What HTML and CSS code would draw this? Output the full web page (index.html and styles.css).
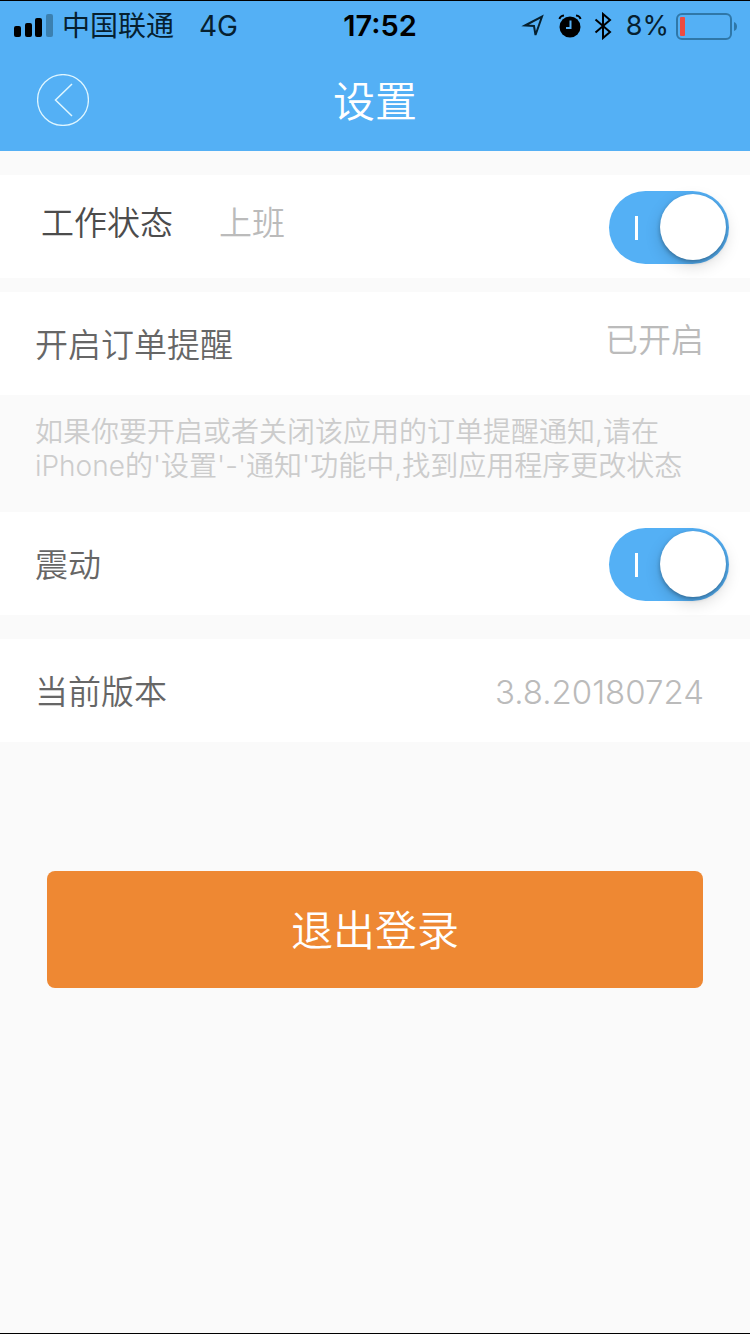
FILE: index.html
```
<!DOCTYPE html>
<html lang="zh-CN">
<head>
    <meta charset="UTF-8">
    <meta name="viewport" content="width=device-width, initial-scale=1.0">
    <title>设置</title>
    <link rel="stylesheet" href="styles.css">
</head>
<body>
    <header>
        <div class="status-bar">
            <div class="status-left">
                <svg class="signal" width="40" height="24" viewBox="0 0 40 24">
                    <rect x="0" y="13" width="7" height="11" rx="2"/>
                    <rect x="11" y="10" width="7" height="14" rx="2"/>
                    <rect x="21" y="5" width="7" height="19" rx="2"/>
                    <rect x="32" y="1" width="7" height="23" rx="2" fill="#3b80b0"/>
                </svg>
                <span class="carrier">中国联通</span>
                <span>4G</span>
            </div>
            <div class="time">17:52</div>
            <div class="status-right">
                <svg width="24" height="26" viewBox="0 0 24 26" fill="none" stroke="#06202f" stroke-width="2" stroke-linejoin="miter">
                    <path d="M4 12.500 L21 3.500 L14.500 22 L13 13 Z"/>
                </svg>
                <svg class="alarm" width="24" height="26" viewBox="0 0 24 26">
                    <circle cx="12" cy="14" r="10.500"/>
                    <path d="M1.500 6 Q2 3 6 2.500 M22.500 6 Q22 3 18 2.500" fill="none" stroke="#000" stroke-width="2"/>
                    <path d="M12.500 7.500 V15 H8" fill="none" stroke="#54b0f5" stroke-width="2"/>
                </svg>
                <svg class="bluetooth" width="18" height="28" viewBox="0 0 18 28" fill="none" stroke="#000" stroke-width="2">
                    <path d="M1.500 7.500 L16 20 L9 26 V2 L16 8 L1.500 20.500"/>
                </svg>
                <span class="percent">8%</span>
                <svg class="battery" width="62" height="28" viewBox="0 0 62 28">
                    <rect x="1" y="2" width="54" height="25" rx="5" fill="none" stroke="#2f77a8" stroke-width="2"/>
                    <rect x="4" y="5" width="5" height="19" rx="1" fill="#ee4b40"/>
                    <path d="M58 10 Q61 11 61 14.500 Q61 18 58 19 Z" fill="#2f77a8"/>
                </svg>
            </div>
        </div>
        <div class="nav">
            <button class="back" type="button" aria-label="返回">
                <svg width="52" height="52" viewBox="0 0 52 52" fill="none" stroke="#dff6ff">
                    <circle cx="26" cy="26" r="25.400" stroke-width="1.300"/>
                    <path d="M35 10 L18.500 26 L35 42" stroke-width="1.500"/>
                </svg>
            </button>
            <h1>设置</h1>
        </div>
    </header>

    <main>
        <section class="row work">
            <label class="strong raised" for="work">工作状态</label>
            <span class="value raised">上班</span>
            <input class="switch" type="checkbox" id="work" checked>
        </section>
        <section class="row">
            <span>开启订单提醒</span>
            <span class="value end raised">已开启</span>
        </section>
        <p class="note">如果你要开启或者关闭该应用的订单提醒通知,请在iPhone的'设置'-'通知'功能中,找到应用程序更改状态</p>
        <section class="row">
            <label for="shake">震动</label>
            <input class="switch" type="checkbox" id="shake" checked>
        </section>
        <section class="row version">
            <span>当前版本</span>
            <span class="value end">3.8.20180724</span>
        </section>
        <button class="logout" type="button">退出登录</button>
    </main>
</body>
</html>
```

FILE: styles.css
```
* {
    box-sizing: border-box;
}
body {
    margin: 0;
    min-height: 100vh;
    border-top: 1px solid #000;
    border-bottom: 1px solid #000;
    background-color: #fafafa;
    color: #666;
    font-family: Inter, "Noto Sans CJK SC", sans-serif;
    font-size: 33px;
    font-weight: 350;
    line-height: 48px;
}
button {
    border: none;
    padding: 0;
    font-family: inherit;
    font-weight: inherit;
    cursor: pointer;
}
svg {
    display: block;
}
header {
    background-color: #54b0f5;
}
.status-bar {
    display: grid;
    grid-template-columns: 1fr auto 1fr;
    align-items: center;
    height: 50px;
    padding: 0 12px 0 14px;
    color: #06202f;
    font-size: 28px;
    font-weight: 400;
}
.status-left, .status-right {
    display: flex;
    align-items: center;
}
.status-right {
    justify-content: flex-end;
}
.signal {
    margin-bottom: 2px;
}
.carrier {
    margin: 0 25px 0 8px;
}
.time {
    padding-left: 8px;
    color: #000;
    font-size: 29px;
    font-weight: 600;
}
.alarm {
    margin-left: 13px;
}
.bluetooth {
    margin: 0 14px 0 12px;
}
.percent {
    font-size: 27px;
    margin-right: 7px;
}
.nav {
    display: grid;
    grid-template-columns: 1fr auto 1fr;
    align-items: center;
    height: 100px;
    padding: 0 37px 2px;
}
.back {
    width: 52px;
    height: 52px;
    background: none;
}
h1 {
    margin: 0;
    padding-top: 4px;
    color: #fff;
    font-size: 42px;
    font-weight: inherit;
}
main {
    padding-top: 24px;
}
.row {
    display: flex;
    align-items: center;
    min-height: 103px;
    padding: 2px 21px 0 35px;
    background-color: #fff;
}
.work {
    margin-bottom: 14px;
    padding-left: 41px;
}
.strong {
    margin-right: 46px;
    color: #4c4c4c;
}
.value {
    color: #bbb;
}
.end {
    margin-left: auto;
    padding-right: 25px;
}
.raised {
    padding-bottom: 9px;
}
.note {
    margin: 0;
    padding: 20px 47px 29px 35px;
    color: #ccc;
    font-size: 28px;
    line-height: 34px;
}
.version {
    margin-top: 24px;
}
.switch {
    appearance: none;
    position: relative;
    width: 120px;
    height: 73px;
    margin: 0 0 0 auto;
    border-radius: 37px;
    background-color: #ddd;
    cursor: pointer;
}
.switch:checked {
    background-color: #54b0f5;
}
/* the "on" mark */
.switch:checked::before {
    content: "";
    position: absolute;
    top: 25px;
    left: 26px;
    width: 3px;
    height: 24px;
    background-color: #fff;
}
.switch::after {
    content: "";
    position: absolute;
    top: 3px;
    left: 3px;
    width: 66px;
    height: 66px;
    border-radius: 50%;
    background-color: #fff;
    box-shadow: 0 2px 4px rgba(0, 0, 0, 0.3), 0 6px 16px rgba(0, 0, 0, 0.15);
}
.switch:checked::after {
    left: 51px;
}
.logout {
    display: block;
    width: calc(100% - 94px);
    margin: 129px auto 0;
    padding: 30px 0 27px;
    border-radius: 8px;
    background-color: #ee8833;
    color: #fff;
    font-size: 42px;
    line-height: 60px;
}
```
